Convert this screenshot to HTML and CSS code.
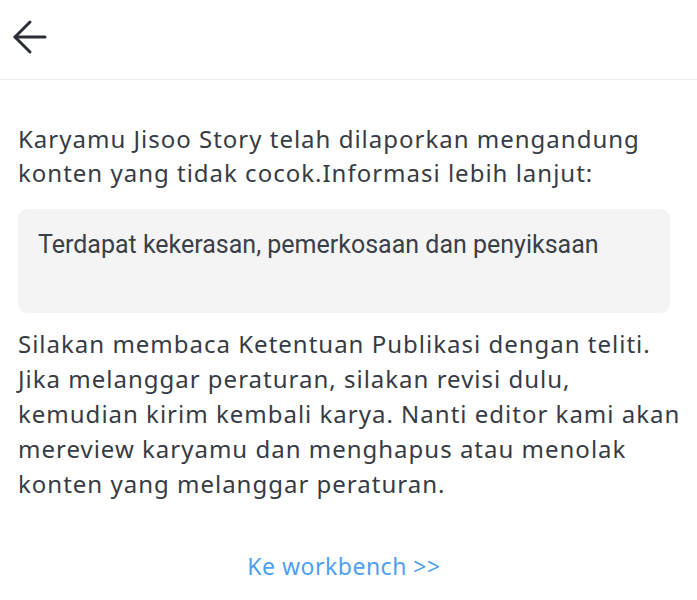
FILE: index.html
```html
<!DOCTYPE html>
<html lang="id">
<head>
<meta charset="utf-8">
<title>Laporan Karya</title>
<link rel="stylesheet" href="styles.css">
</head>
<body>
<header class="topbar">
  <button class="back" aria-label="Kembali">
    <svg width="36" height="36" viewBox="0 0 36 36" fill="none" stroke="#2b2f36" stroke-width="3" stroke-linecap="round" stroke-linejoin="round">
      <path d="M33 18H3"/>
      <path d="M18 3L3 18L18 33"/>
    </svg>
  </button>
</header>
<main class="content">
  <p class="intro">Karyamu Jisoo Story telah dilaporkan mengandung konten yang tidak cocok.Informasi lebih lanjut:</p>
  <div class="reason">Terdapat kekerasan, pemerkosaan dan penyiksaan</div>
  <p class="notice">Silakan membaca Ketentuan Publikasi dengan teliti. Jika melanggar peraturan, silakan revisi dulu, kemudian kirim kembali karya. Nanti editor kami akan mereview karyamu dan menghapus atau menolak konten yang melanggar peraturan.</p>
  <div class="linkrow"><a class="workbench" href="#">Ke workbench &gt;&gt;</a></div>
</main>
</body>
</html>
```
FILE: styles.css
```css
html, body {
  margin: 0;
  padding: 0;
  background: #ffffff;
}
body {
  font-family: "Noto Sans", "Open Sans", sans-serif;
  color: #363b44;
}
.topbar {
  height: 80px;
  border-bottom: 1px solid #ededed;
  display: flex;
  align-items: center;
  padding-left: 12px;
  box-sizing: border-box;
}
.back {
  background: none;
  border: 0;
  padding: 0;
  margin-top: -6px;
  display: flex;
  cursor: pointer;
}
.content {
  padding: 0 27px 0 18px;
}
.intro {
  margin: 42px 0 0;
  font-size: 24px;
  letter-spacing: 1px;
  line-height: 34px;
}
.reason {
  margin-top: 19px;
  background: #f4f4f5;
  border-radius: 9px;
  height: 104px;
  box-sizing: border-box;
  padding: 18px 20px 0;
  font-family: Roboto, "Noto Sans", sans-serif;
  font-size: 25px;
  line-height: 36px;
  color: #3a3f48;
}
.notice {
  margin: 13px -20px 0 0;
  font-size: 24px;
  letter-spacing: 1px;
  line-height: 35px;
}
.linkrow {
  display: flex;
  justify-content: center;
  margin-top: 50px;
}
.workbench {
  color: #4f9ff0;
  text-decoration: none;
  font-size: 23px;
  letter-spacing: 0.5px;
  line-height: 30px;
}
```
